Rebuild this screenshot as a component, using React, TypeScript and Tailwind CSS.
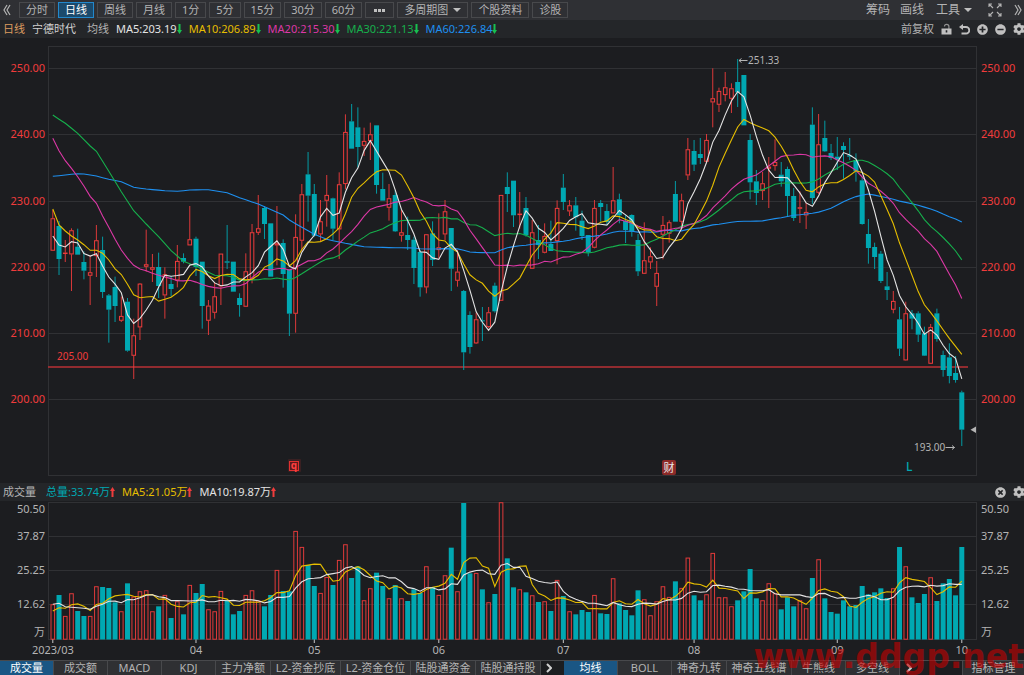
import React from 'react';
import { FaPlusCircle, FaMinusCircle, FaCog, FaTimesCircle } from 'react-icons/fa';

interface Candle {
  up: boolean;
  top: number;
  bottom: number;
  high: number;
  low: number;
}

type Point = [number, number];

// Candles in thirds of a plot unit: direction, body top, body bottom, high, low.
// Every block has its own vertical origin.
const BLOCKS: { origin: number; rows: string }[] = [
  {
    origin: 120,
    rows: `r535 632 510 632|g558 657 543 705|r638 640 600 666|r571 643 565 753|g620 644 566 644|g666 692 634 718
r697 707 646 795|r601 648 555 711|g630 756 590 774|g766 809 762 908|g741 798 710 846|r828 842 770 846
g785 932 774 935|r886 947 836 1017|r731 862 729 900|r673 680 569 695|r682 689 642 726|g681 738 638 774
r703 766 682 836|g732 747 708 770|r663 721 615 742|g654 665 640 670|r598 616 498 616|g596 681 590 708
g665 798 665 866|r797 842 780 885|r769 818 728 836|r641 739 641 795|g664 668 555 687|g665 755 665 755
g774 795 760 830|r694 800 640 800|r577 718 552 730|r565 578 465 585`,
  },
  {
    origin: 270,
    rows: `g354 402 348 447|g400 560 400 560|r460 466 348 526|g459 552 448 593|g538 671 538 738|r441 671 373 728
r313 452 282 485|g253 317 186 395|g312 437 282 440|r394 433 330 455|r315 332 255 410|g325 416 323 450
r283 418 247 507|r126 282 73 298|g94 176 42 176|g112 171 52 232|r153 167 113 198|r133 153 98 210
g106 285 106 311|g297 332 248 332|r325 353 282 392|g315 424 300 426|r427 437 360 455|g435 450 380 480
g449 534 440 582|g486 592 480 620|r433 592 433 610|g430 510 394 528|r472 480 370 505|r364 433 330 450
g414 536 414 603|r545 572 480 590|g603 787 600 840|g675 771 664 791|r688 760 668 762|g691 693 651 753
r667 711 651 715|g587 664 578 668|r315 632 315 632|g291 312 247 366|g272 376 272 411|r371 375 306 416
g354 436 321 440|r427 536 390 537|g450 465 405 507|r438 488 400 490|g462 483 392 483|r354 453 331 523
g293 336 252 360|r346 364 330 378|g346 382 321 422|g392 438 362 450|g435 488 435 499|r354 473 330 475
g339 351 330 395|g363 396 342 405|r331 370 231 370|g328 376 311 400|g393 420 375 459|g375 425 373 440
g450 544 432 558|r511 551 397 552|r499 517 472 537|r549 590 513 648|r405 434 378 508|r397 431 391 458
g312 395 273 395|r331 395 311 418|r178 256 144 270|g183 224 150 243`,
  },
  {
    origin: 150,
    rows: `g312 324 264 342|r270 335 252 340|r145 157 55 232|r123 164 113 186|r112 135 66 154|r115 146 100 189
g96 127 27 171|g75 226 75 226|g270 397 252 448|g394 429 360 465|r400 423 366 450|r350 356 321 474
r336 348 268 362|g374 394 336 410|g357 438 350 500|g438 504 414 513|r472 476 424 519|r486 496 458 537
g224 444 172 462|r283 428 192 432|g264 304 212 306|g309 324 282 330|g320 328 261 360|g288 300 277 386
g316 320 264 330|g330 364 310 395|g391 522 380 524|g552 594 507 641|g591 621 578 657|g611 693 603 699
g709 720 666 750|r753 779 723 790|g808 896 771 918|r790 931 755 932|g790 806 780 838|g790 854 784 876
g850 917 830 918|r831 941 822 942|g790 867 776 875|g915 960 902 980|g922 978 880 1000|g969 990 918 998
g1027 1139 1022 1188`,
  },
];

const candles: Candle[] = BLOCKS.flatMap(({ origin, rows }) =>
  rows.split(/[|\n]/).map((row) => {
    const [top, bottom, high, low] = row.slice(1).split(' ').map((n) => (Number(n) + origin) / 3);
    return { up: row[0] === 'r', top, bottom, high, low };
  }),
);

// Tops of the volume bars, same thirds.
const volumes = [
  373, 345, 408, 340, 393, 408, 408, 319, 321, 324, 367, 394, 310, 350, 334, 331, 394, 379, 345, 414, 364, 403, 315,
  339, 312, 388, 394, 333, 360, 403, 393, 345, 331, 362, 379, 345, 270, 333, 334, 153, 201, 255, 318, 339, 291, 315,
  240, 193, 294, 259, 361, 325, 278, 318, 355, 315, 355, 363, 328, 339, 259, 321, 345, 286, 203, 334, 69, 280, 279,
  328, 367, 342, 67, 235, 322, 328, 337, 346, 366, 364, 393, 300, 348, 394, 403, 390, 396, 345, 400, 402, 295, 370,
  390, 406, 331, 358, 406, 364, 319, 351, 304, 324, 233, 346, 361, 343, 219, 352, 352, 379, 361, 334, 267, 355, 361,
  310, 340, 388, 352, 379, 361, 385, 294, 238, 355, 396, 401, 361, 379, 375, 318, 343, 337, 325, 354, 325, 201, 259,
  352, 369, 342, 292, 363, 310, 297, 346, 201,
].map((n) => 480 + n / 3);

const xAt = (i: number) => 52.8 + i * 6.226;

// The first days of each average need history from before the chart starts.
const fillSeed = (keys: Point[], count: number) => {
  const out: number[] = [];
  for (let i = 0; i < count; i++) {
    const next = keys.findIndex(([k]) => k >= i);
    if (next <= 0) {
      out.push(next === 0 ? keys[0][1] : keys[keys.length - 1][1]);
      continue;
    }
    const [x0, y0] = keys[next - 1];
    const [x1, y1] = keys[next];
    out.push(y0 + ((y1 - y0) * (i - x0)) / (x1 - x0));
  }
  return out;
};

const average = (values: number[], period: number, seed: Point[], origin = 0) => {
  const start = fillSeed(seed, period - 1).map((n) => n / 3 + origin);
  return values.map((_, i) =>
    i < period - 1 ? start[i] : values.slice(i - period + 1, i + 1).reduce((a, b) => a + b, 0) / period,
  );
};

const toPoints = (values: number[]) => values.map((y, i) => `${xAt(i).toFixed(1)},${y.toFixed(1)}`).join(' ');

const closes = candles.map((c) => (c.up ? c.top : c.bottom));

const priceLines = [
  {
    color: '#1e90f0',
    values: average(closes, 60, [
      [0, 529], [2, 525], [4, 521], [5, 522], [7, 528], [9, 538], [11, 545], [13, 562], [15, 567], [18, 572],
      [20, 574], [22, 570], [25, 569], [28, 578], [30, 593], [33, 612], [37, 645], [38, 660], [40, 682], [42, 703],
      [44, 718], [47, 730], [50, 740], [52, 742], [58, 744],
    ]),
  },
  {
    color: '#16b04c',
    values: average(closes, 30, [
      [0, 345], [2, 370], [4, 400], [6, 438], [7, 454], [9, 514], [11, 575], [13, 632], [15, 672], [17, 710],
      [19, 752], [21, 784], [22, 791], [24, 807], [26, 826], [28, 827],
    ]),
  },
  {
    color: '#dc38a6',
    values: average(closes, 20, [
      [0, 415], [1, 452], [2, 482], [3, 505], [4, 530], [5, 558], [6, 589], [7, 610], [8, 648], [9, 682], [10, 718],
      [11, 750], [12, 775], [13, 796], [14, 807], [15, 812], [16, 820], [17, 826], [18, 831],
    ]),
  },
  {
    color: '#e6be00',
    values: average(closes, 10, [
      [0, 627], [1, 675], [2, 693], [3, 708], [4, 720], [5, 734], [6, 751], [7, 751], [8, 760],
    ]),
  },
  { color: '#e4e4e4', values: average(closes, 5, [[0, 708], [1, 735], [2, 741], [3, 725]]) },
];

const volumeLines = [
  { color: '#e6be00', values: average(volumes, 5, [[0, 393], [1, 383], [2, 385], [3, 374]], 480) },
  {
    color: '#e4e4e4',
    values: average(volumes, 10, [[0, 373], [1, 370], [2, 380], [5, 385], [6, 388], [7, 379], [8, 373]], 480),
  },
];

const PRICE_TICKS = [
  { label: '250.00', y: 68 },
  { label: '240.00', y: 134 },
  { label: '230.00', y: 201 },
  { label: '220.00', y: 267 },
  { label: '210.00', y: 333 },
  { label: '200.00', y: 399 },
];

const VOLUME_TICKS = [
  { label: '50.50', y: 509, line: false },
  { label: '37.87', y: 536, line: true },
  { label: '25.25', y: 570, line: true },
  { label: '12.62', y: 604, line: true },
  { label: '万', y: 632, line: false },
];

const MONTHS = [
  { label: '2023/03', index: 0 },
  { label: '04', index: 23 },
  { label: '05', index: 42 },
  { label: '06', index: 62 },
  { label: '07', index: 82 },
  { label: '08', index: 103 },
  { label: '09', index: 126 },
  { label: '10', index: 146 },
];

const PERIODS = ['分时', '日线', '周线', '月线', '1分', '5分', '15分', '30分', '60分'];

const AVERAGES = [
  { label: 'MA5:203.19', color: 'text-[#e4e4e4]' },
  { label: 'MA10:206.89', color: 'text-[#e6be00]' },
  { label: 'MA20:215.30', color: 'text-[#dc38a6]' },
  { label: 'MA30:221.13', color: 'text-[#16b04c]' },
  { label: 'MA60:226.84', color: 'text-[#1e90f0]' },
];

const VOLUME_LEGEND = [
  { label: '总量:33.74万', color: 'text-[#00a8b2]' },
  { label: 'MA5:21.05万', color: 'text-[#e6be00]' },
  { label: 'MA10:19.87万', color: 'text-[#e4e4e4]' },
];

const INDICATORS = [
  { label: '成交量', width: 'w-[54px]' },
  { label: '成交额', width: 'w-[54px]' },
  { label: 'MACD', width: 'w-[54px]' },
  { label: 'KDJ', width: 'w-[54px]' },
  { label: '主力净额', width: 'w-[55px]' },
  { label: 'L2-资金抄底', width: 'w-[70px]' },
  { label: 'L2-资金仓位', width: 'w-[70px]' },
  { label: '陆股通资金', width: 'w-[65px]' },
  { label: '陆股通持股', width: 'w-[65px]' },
];

const OVERLAYS = [
  { label: '均线', width: 'w-[54px]' },
  { label: 'BOLL', width: 'w-[54px]' },
  { label: '神奇九转', width: 'w-[55px]' },
  { label: '神奇五线谱', width: 'w-[65px]' },
  { label: '牛熊线', width: 'w-[54px]' },
  { label: '多空线', width: 'w-[54px]' },
];

const Arrow: React.FC<{ up?: boolean }> = ({ up }) => (
  <svg
    viewBox="0 0 5 10"
    className={up ? 'w-[5px] h-[10px] fill-[#f03c3c]' : 'w-[5px] h-[10px] fill-[#18c050] rotate-180'}
  >
    <path d="M2.5 0 5 4H3.5V10H1.5V4H0Z" />
  </svg>
);

const Chevrons: React.FC<{ left?: boolean }> = ({ left }) => (
  <svg
    viewBox="0 0 8 12"
    className={left ? 'w-2 h-3 rotate-180' : 'w-2 h-3'}
    fill="none"
    stroke="#b4b4b4"
    strokeWidth="1.2"
  >
    <path d="M1 1 4 6 1 11M4 1 7 6 4 11" />
  </svg>
);

const MoreArrow = () => (
  <svg viewBox="0 0 6 10" className="w-[6px] h-[10px]" fill="none" stroke="#d0d0d0" strokeWidth="2">
    <path d="M1 1 5 5 1 9" />
  </svg>
);

const Caret = () => (
  <svg viewBox="0 0 8 4" className="w-2 h-1 fill-[#c0c0c0]">
    <path d="M0 0H8L4 4Z" />
  </svg>
);

const ExpandIcon = () => (
  <svg viewBox="0 0 14 14" className="w-[14px] h-[14px]" fill="none" stroke="#b4b4b4" strokeWidth="1.1">
    <path d="M1 4V1H4M1 1 5 5M10 1H13V4M13 1 9 5M1 10V13H4M1 13 5 9M13 10V13H10M13 13 9 9" />
  </svg>
);

const LockIcon = () => (
  <svg viewBox="0 0 11 12" className="w-[11px] h-3">
    <path d="M3.5 3.5A2.2 2.2 0 0 1 7.9 3.5V6" fill="none" stroke="#909090" strokeWidth="1.2" />
    <path d="M0.5 5.5H10.5V11.5H0.5ZM4.7 7.2V9.4H6.3V7.2Z" fill="#c0c0c0" fillRule="evenodd" />
  </svg>
);

const UndoIcon = () => (
  <svg viewBox="0 0 11 11" className="w-[11px] h-[11px]">
    <path d="M3 3H7A3.2 3.2 0 0 1 7 9.5H2.5" fill="none" stroke="#c0c0c0" strokeWidth="1.8" />
    <path d="M0 3 4 0V6Z" fill="#c0c0c0" />
  </svg>
);

const ChartBars = () => (
  <>
    {candles.map((c, i) => {
      const x = xAt(i);
      const color = c.up ? '#f03c3c' : '#00a8b2';
      return (
        <g key={i} stroke={color} strokeWidth="1">
          <path d={`M${x} ${c.high}V${c.top}M${x} ${c.bottom}V${c.low}`} strokeOpacity="0.9" />
          {c.up ? (
            <rect x={x - 1.8} y={c.top + 0.4} width="3.6" height={Math.max(c.bottom - c.top - 0.8, 0.4)} fill="none" />
          ) : (
            <rect x={x - 2.5} y={c.top} width="5" height={Math.max(c.bottom - c.top, 1)} fill={color} stroke="none" />
          )}
        </g>
      );
    })}
  </>
);

const PriceChart = () => (
  <svg viewBox="0 38 1024 445" className="block w-full" role="img" aria-label="宁德时代 日线">
    <rect x="48.5" y="46.5" width="928" height="429" fill="none" stroke="#303134" />
    {PRICE_TICKS.map((t) => (
      <g key={t.label} fontSize="11" fill="#f03c3c">
        <path d={`M48 ${t.y + 0.5}H976`} stroke="#303134" />
        <text x="45" y={t.y + 4} textAnchor="end">{t.label}</text>
        <text x="981" y={t.y + 4}>{t.label}</text>
      </g>
    ))}
    <path d="M48 367H968" stroke="#b83034" strokeWidth="1.4" />
    <text x="57" y="360" fontSize="10" fill="#f03c3c">205.00</text>
    <ChartBars />
    {priceLines.map((line) => (
      <polyline key={line.color} points={toPoints(line.values)} fill="none" stroke={line.color} strokeWidth="1.1" />
    ))}
    <g fontSize="10" fill="#b4b4b4" stroke="none">
      <text x="748" y="64">251.33</text>
      <text x="914" y="451">193.00</text>
    </g>
    <path
      d="M747.5 60.5H739M741.5 58.5 739 60.5 741.5 62.5M945.5 447.5H954.5M952 445.5 954.5 447.5 952 449.5"
      fill="none"
      stroke="#b4b4b4"
    />
    <path d="M976 426.5V433L970.5 429.7Z" fill="#b4b4b4" />
    <rect x="288" y="459" width="13" height="13" rx="1" fill="#3a2022" />
    <rect x="289.5" y="461.5" width="9" height="9" fill="#5a1a1c" stroke="#e03030" />
    <text x="294" y="469" fontSize="10" fontWeight="700" textAnchor="middle" fill="#ff4040">q</text>
    <rect x="662" y="460" width="14" height="15" rx="2" fill="#8c2a28" />
    <text x="669" y="472" fontSize="11" textAnchor="middle" fill="#e8e8e8">财</text>
    <text x="906" y="471" fontSize="12" fontWeight="500" fill="#00a8b2">L</text>
  </svg>
);

const VolumeChart = () => (
  <svg viewBox="0 501 1024 159" className="block w-full" role="img" aria-label="成交量">
    <rect x="48.5" y="502.5" width="928" height="137" fill="none" stroke="#303134" />
    {VOLUME_TICKS.map((t) => (
      <g key={t.label} fontSize="11" fill="#b4b4b4">
        {t.line && <path d={`M48 ${t.y + 0.5}H976`} stroke="#303134" />}
        <text x="45" y={t.y + 4} textAnchor="end">{t.label}</text>
        <text x="981" y={t.y + 4}>{t.label}</text>
      </g>
    ))}
    {volumes.map((y, i) =>
      candles[i].up ? (
        <rect key={i} x={xAt(i) - 1.8} y={y + 0.4} width="3.6" height={638.8 - y} fill="none" stroke="#e03a3a" />
      ) : (
        <rect key={i} x={xAt(i) - 2.5} y={y} width="5" height={639.5 - y} fill="#00a8b2" />
      ),
    )}
    {volumeLines.map((line) => (
      <polyline key={line.color} points={toPoints(line.values)} fill="none" stroke={line.color} strokeWidth="1.1" />
    ))}
    {MONTHS.map((m) => (
      <g key={m.label}>
        <path d={`M${xAt(m.index)} 639.5V643`} stroke="#c8c8c8" />
        <text x={xAt(m.index)} y="654" fontSize="11" textAnchor="middle" fill="#b4b4b4">{m.label}</text>
      </g>
    ))}
  </svg>
);

const ToolButton: React.FC<{ active?: boolean; label?: string; children: React.ReactNode }> = ({
  active,
  label,
  children,
}) => (
  <button
    aria-label={label}
    className={
      active
        ? 'flex items-center gap-[5px] h-4 px-1.5 border border-[#2288cc] bg-[#1b4a6c] text-white'
        : 'flex items-center gap-[5px] h-4 px-1.5 border border-[#48494c] text-[#b4b4b4]'
    }
  >
    {children}
  </button>
);

const Tabs: React.FC<{ items: { label: string; width: string }[] }> = ({ items }) => (
  <>
    {items.map((item, i) => (
      <button
        key={item.label}
        className={`${item.width} flex items-center justify-center h-full border-r border-[#48494c] leading-[14px] ${
          i === 0 ? 'bg-[#1a5684] text-white' : 'bg-[#2f3033] text-[#b4b4b4]'
        }`}
      >
        {item.label}
      </button>
    ))}
  </>
);

export default function App() {
  return (
    <div className="relative overflow-hidden bg-[#1c1d20] text-[11px] leading-4 whitespace-nowrap text-[#b4b4b4] font-['Noto_Sans','Noto_Sans_CJK_SC',sans-serif]">
      <header className="flex items-center justify-between h-5 pl-[3px] pr-[2px] bg-[#2f3034]">
        <nav className="flex items-center gap-[3px]">
          <button aria-label="收起" className="w-[13px]">
            <Chevrons left />
          </button>
          {PERIODS.map((p) => (
            <ToolButton key={p} active={p === '日线'}>
              {p}
            </ToolButton>
          ))}
          <ToolButton label="更多周期">
            <svg viewBox="0 0 15 3" className="w-[15px] h-[3px] fill-[#c0c0c0]">
              <path d="M2 0H5V3H2ZM6 0H9V3H6ZM10 0H13V3H10Z" />
            </svg>
          </ToolButton>
          <ToolButton>
            多周期图
            <Caret />
          </ToolButton>
          <ToolButton>个股资料</ToolButton>
          <ToolButton>诊股</ToolButton>
        </nav>
        <div className="flex items-center text-xs">
          <button className="mr-[10px]">筹码</button>
          <button className="mr-3">画线</button>
          <button className="flex items-center gap-1 mr-4">
            工具
            <Caret />
          </button>
          <button aria-label="全屏" className="mr-3">
            <ExpandIcon />
          </button>
          <button aria-label="展开">
            <Chevrons />
          </button>
        </div>
      </header>

      <section className="flex items-center justify-between h-[18px] pl-[3px] bg-[#242629]">
        <div className="flex items-center">
          <span className="mr-[7px] text-[#dc9c60]">日线</span>
          <span className="mr-[11px] text-[#d0d0d0]">宁德时代</span>
          <span className="mr-[7px]">均线</span>
          {AVERAGES.map((a) => (
            <span key={a.label} className={`flex items-center mr-[7px] ${a.color}`}>
              {a.label}
              <Arrow />
            </span>
          ))}
        </div>
        <div className="flex items-center gap-[7px] -mr-px text-[#c0c0c0]">
          <button className="text-[#b4b4b4]">前复权</button>
          <button aria-label="锁定"><LockIcon /></button>
          <button aria-label="撤销"><UndoIcon /></button>
          <button aria-label="放大"><FaPlusCircle size={11} /></button>
          <button aria-label="缩小"><FaMinusCircle size={11} /></button>
          <button aria-label="设置"><FaCog size={12} /></button>
        </div>
      </section>

      <PriceChart />

      <section className="flex items-center justify-between h-[18px] pl-[3px] bg-[#242629]">
        <div className="flex items-center">
          <span className="mr-[10px]">成交量</span>
          {VOLUME_LEGEND.map((v) => (
            <span key={v.label} className={`flex items-center mr-[7px] ${v.color}`}>
              {v.label}
              <Arrow up />
            </span>
          ))}
        </div>
        <div className="flex items-center gap-[7px] -mr-px text-[#c0c0c0]">
          <button aria-label="关闭"><FaTimesCircle size={11} /></button>
          <button aria-label="指标设置"><FaCog size={12} /></button>
        </div>
      </section>

      <VolumeChart />

      <footer className="flex items-center h-[15px] border-t border-[#48494c]">
        <Tabs items={INDICATORS} />
        <button aria-label="更多指标" className="flex justify-center w-[23px] pr-2">
          <MoreArrow />
        </button>
        <Tabs items={OVERLAYS} />
        <button aria-label="更多均线" className="flex justify-center w-[17px]">
          <MoreArrow />
        </button>
        <button className="flex items-center justify-center w-[62px] h-full ml-auto bg-[#2f3033] border-l border-[#48494c] leading-[14px]">
          指标管理
        </button>
      </footer>

      <div className="absolute right-0 -bottom-[6px] text-[33px] leading-[48px] font-bold text-[#c80000]/60 pointer-events-none font-['DejaVu_Sans',sans-serif]">
        www.ddgp.net
      </div>
    </div>
  );
}
